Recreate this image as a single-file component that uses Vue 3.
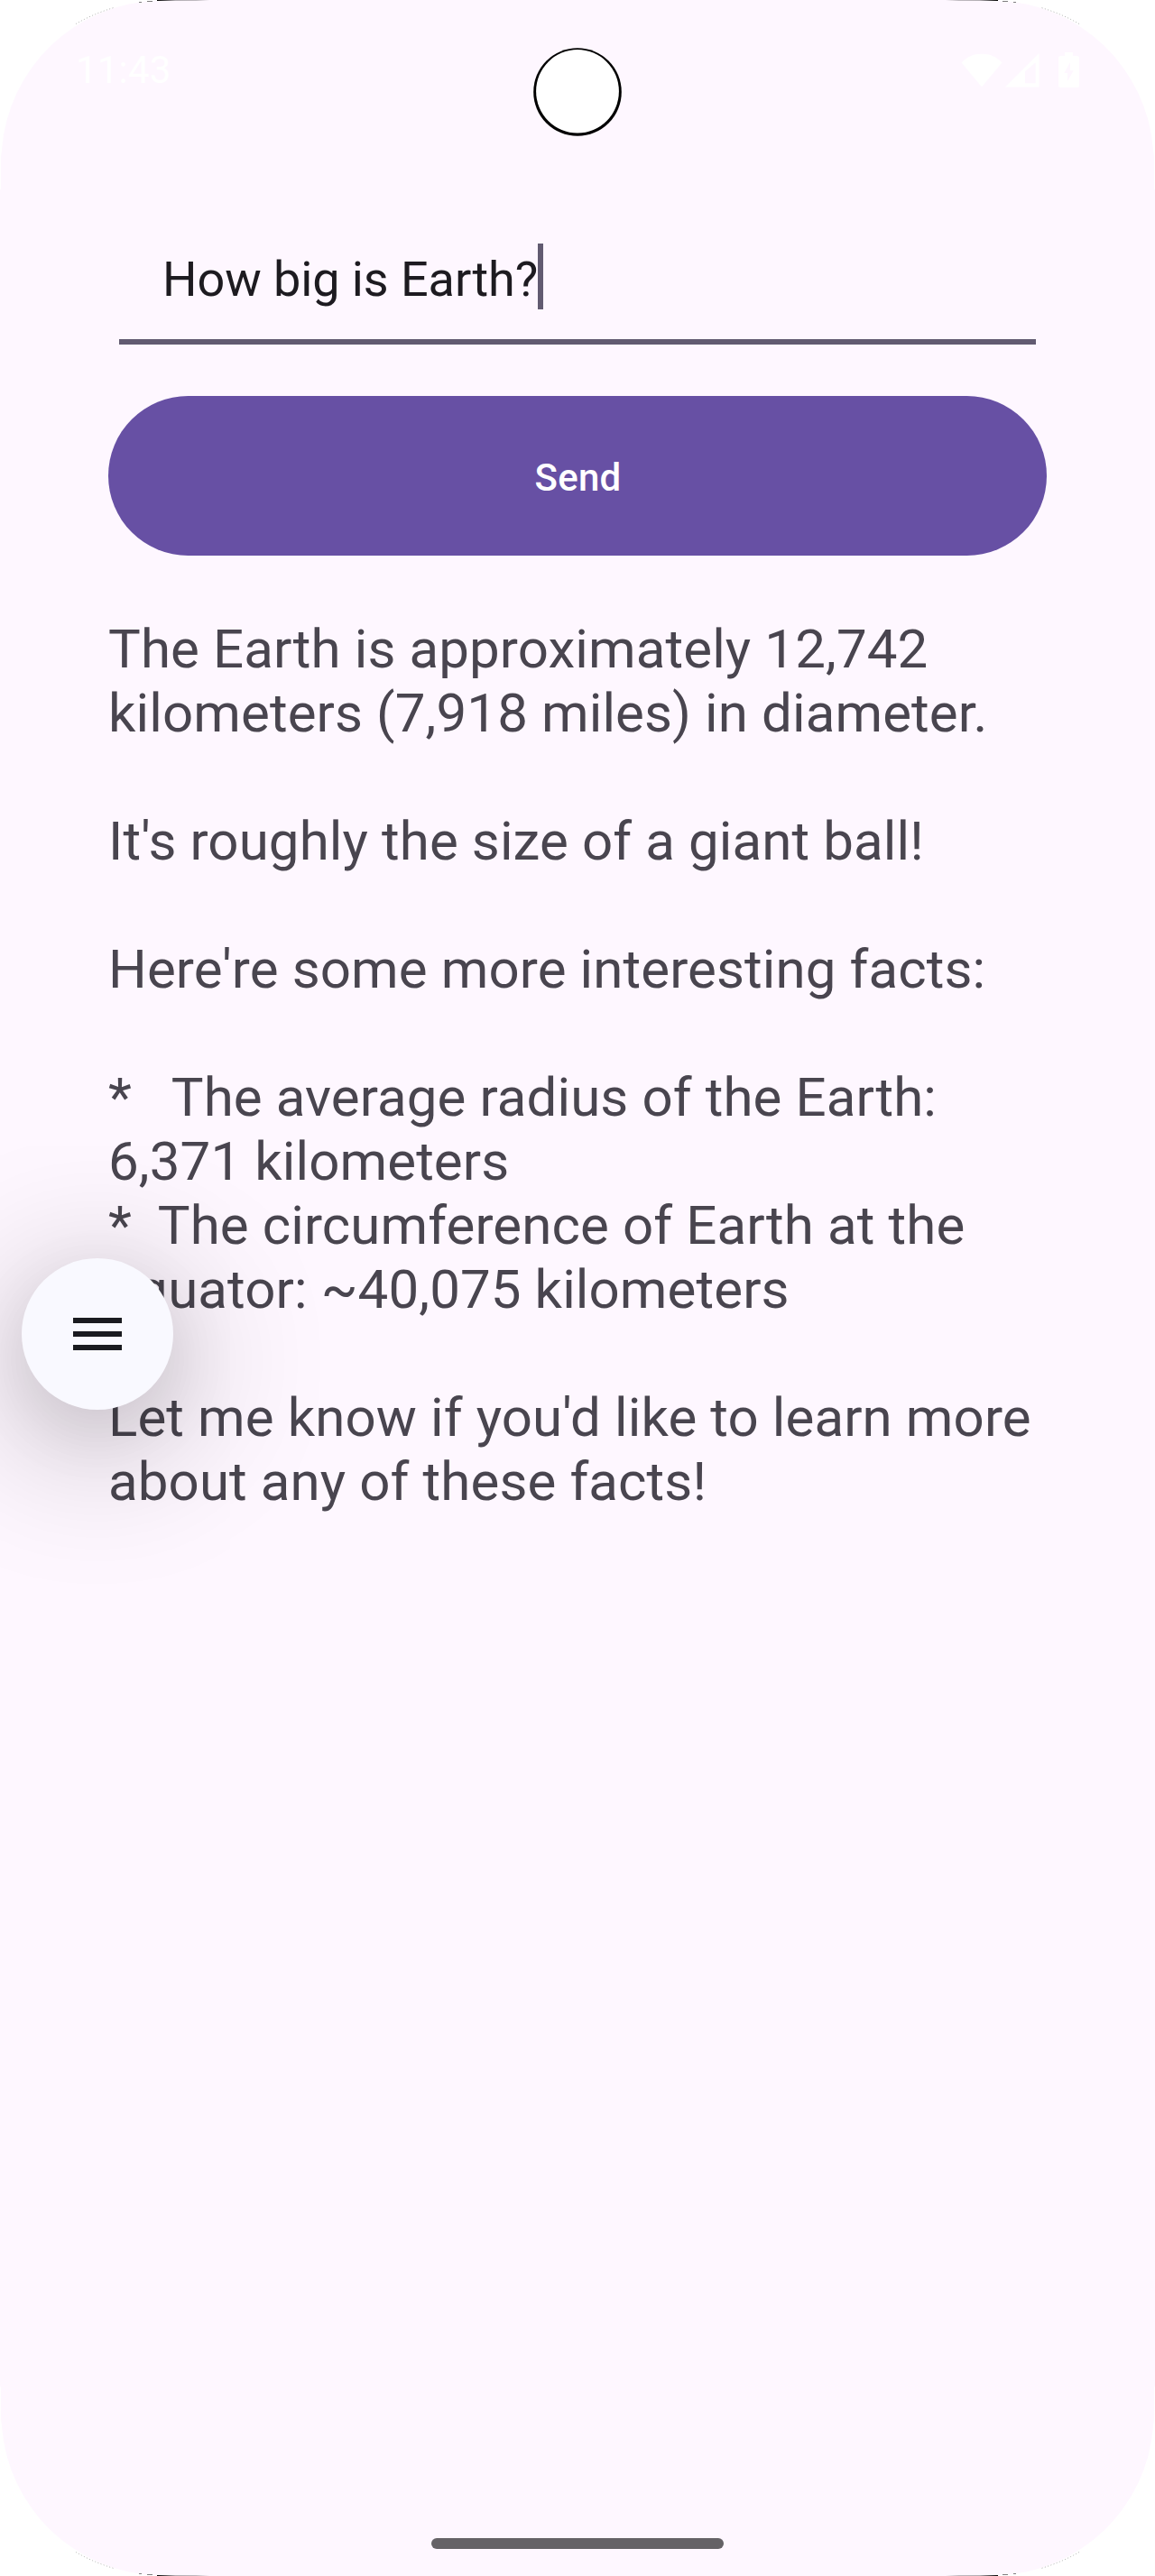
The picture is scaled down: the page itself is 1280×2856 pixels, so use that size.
<script setup>
import { ref } from 'vue'

const prompt = ref('How big is Earth?')
const answer = [
  'The Earth is approximately 12,742',
  'kilometers (7,918 miles) in diameter.',
  '',
  "It's roughly the size of a giant ball!",
  '',
  "Here're some more interesting facts:",
  '',
  '*   The average radius of the Earth:',
  '6,371 kilometers',
  '*  The circumference of Earth at the',
  'equator: ~40,075 kilometers',
  '',
  "Let me know if you'd like to learn more",
  'about any of these facts!',
].join('\n')
const corners = ['tl', 'tr', 'bl', 'br']
</script>

<template>
  <div class="screen">
    <header class="status">
      <span class="clock">11:43</span>
      <div class="icons">
        <svg class="wifi" width="46" height="38" viewBox="0 0 46 38">
          <path d="M0.5 10.5C6.500 4 14 .8 23 .8S39.500 4 45.500 10.500L23 37.500Z" />
        </svg>
        <svg class="signal" width="38" height="38" viewBox="0 0 38 38">
          <path fill-rule="evenodd" d="M0 37.500L37.500 0V37.500ZM22 20.300V33.300H33.700V10.300Z" />
        </svg>
        <svg class="battery" width="23" height="39" viewBox="0 0 23 39">
          <path fill-rule="evenodd" d="M7 0H16V4H20.500Q23 4 23 6.500V36.500Q23 39 20.500 39H2.500Q0 39 0 36.500V6.500Q0 4 2.500 4H7ZM13 11L6.300 23H10V32L16.700 20.300H13Z" />
        </svg>
      </div>
    </header>

    <main class="content">
      <div class="field">
        <span class="value">{{ prompt }}</span><span class="caret"></span>
      </div>
      <button class="send" type="button">Send</button>
      <p class="answer">{{ answer }}</p>
    </main>

    <footer class="nav"><span class="handle"></span></footer>

    <svg class="camera" width="98" height="98" viewBox="0 0 98 98">
      <circle cx="49" cy="49" r="48.800" fill="#000" />
      <ellipse cx="49" cy="48.300" rx="45.900" ry="46.200" fill="#fff" />
    </svg>

    <button class="fab" type="button" aria-label="Menu">
      <svg width="72" height="72" viewBox="0 0 24 24">
        <path d="M3 18h18v-2H3v2zm0-5h18v-2H3v2zm0-7v2h18V6H3z" fill="#1a1b20" />
      </svg>
    </button>

    <svg v-for="c in corners" :key="c" class="corner" :class="c" width="240" height="212" viewBox="0 0 240 212">
      <defs>
        <linearGradient :id="'edge-' + c" x1="174" x2="232" y1="0" y2="0" gradientUnits="userSpaceOnUse">
          <stop offset="0" stop-color="#000" />
          <stop offset=".35" stop-color="#000" stop-opacity=".3" />
          <stop offset=".75" stop-color="#000" stop-opacity=".25" />
          <stop offset="1" stop-color="#000" stop-opacity="0" />
        </linearGradient>
      </defs>
      <path d="M0 0H174V.700A179 179 0 0 0 2 166L1 174V210H0Z" fill="#fff" />
      <path d="M84 26.500Q103 15.500 126 8.500" fill="none" stroke="#000" stroke-opacity=".4" stroke-width=".8" stroke-dasharray="1 2.400" />
      <path d="M154 2.500H157M163 1.500H169" stroke="#000" stroke-opacity=".5" />
      <rect x="174" y="0" width="58" height="1" :fill="'url(#edge-' + c + ')'" />
    </svg>
  </div>
</template>

<style>
html, body { margin: 0; background: #fff; }
</style>

<style scoped>
.screen {
  position: relative;
  display: flex;
  flex-direction: column;
  width: 1280px;
  height: 2856px;
  overflow: hidden;
  box-sizing: border-box;
  background: #fef7ff;
  font-family: Roboto, sans-serif;
}
.status {
  display: flex;
  justify-content: space-between;
  box-sizing: border-box;
  height: 156px;
  padding: 53px 84px 0;
  color: #fff;
}
.clock { font-size: 42px; line-height: 49px; letter-spacing: 0.2px; }
.icons { display: flex; align-items: flex-start; padding-top: 5px; }
.icons svg { fill: #fff; }
.wifi { margin: 1px 3px 0 0; }
.signal { margin: 1px 21px 0 0; }
.content {
  display: flex;
  flex-direction: column;
  flex: 1;
  padding: 0 120px;
}
.field {
  display: flex;
  box-sizing: border-box;
  height: 226px;
  margin: 0 12px;
  padding: 114px 48px 0;
  border-bottom: 6px solid #625b71;
}
.value {
  width: 416px;
  padding-top: 3px;
  font-size: 54px;
  line-height: 73px;
  letter-spacing: -0.08px;
  color: #1d1b20;
  white-space: pre;
}
.caret { width: 6px; height: 73px; background: #625b71; }
.send {
  height: 177px;
  margin: 57px 0 0;
  padding: 3px 0 0 1px;
  border: 0;
  border-radius: 89px;
  background: #6750a4;
  color: #fff;
  font: 500 42px/49px Roboto, sans-serif;
  letter-spacing: 0.3px;
}
.answer {
  margin: 68px 0 0;
  font-size: 60px;
  line-height: 71px;
  letter-spacing: 0.11px;
  color: #49454f;
  white-space: pre;
}
.nav { display: flex; justify-content: center; height: 42px; }
.handle { width: 324px; height: 12px; border-radius: 6px; background: #656266; }
.camera { position: absolute; left: 591px; top: 53px; overflow: visible; }
.fab {
  position: absolute;
  left: 24px;
  top: 1395px;
  display: flex;
  align-items: center;
  justify-content: center;
  width: 168px;
  height: 168px;
  padding: 0;
  border: 0;
  border-radius: 50%;
  background: #f9f9ff;
  box-shadow: 0 24px 72px rgba(0, 0, 0, 0.08), 0 30px 160px 20px rgba(0, 0, 0, 0.22);
}
.corner { position: absolute; }
.tl { left: 0; top: 0; }
.tr { right: 0; top: 0; transform: scaleX(-1); }
.bl { left: 0; bottom: 0; transform: scaleY(-1); }
.br { right: 0; bottom: 0; transform: scale(-1); }
</style>
